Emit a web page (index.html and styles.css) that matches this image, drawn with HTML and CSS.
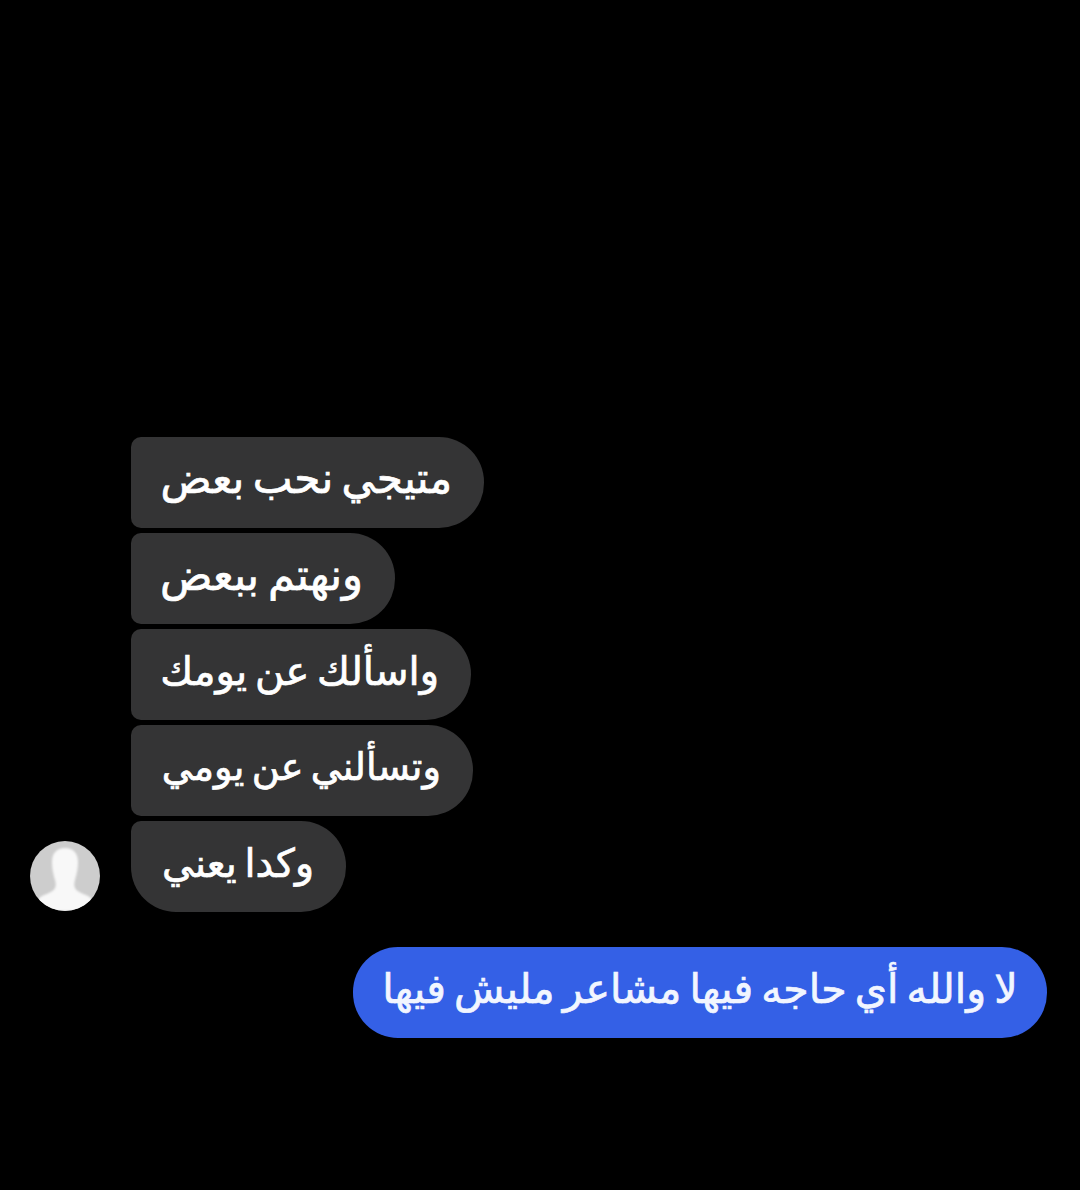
FILE: index.html
```html
<!DOCTYPE html>
<html lang="ar">
<head>
    <meta charset="UTF-8">
    <meta name="viewport" content="width=device-width, initial-scale=1.0">
    <title>Chat</title>
    <link rel="stylesheet" href="styles.css">
</head>
<body>

    <div class="chat">
        <div class="incoming">
            <div class="avatar">
                <svg viewBox="0 0 70 70" width="70" height="70">
                    <defs>
                        <clipPath id="avatarClip"><circle cx="35" cy="35" r="35"/></clipPath>
                        <filter id="soft"><feGaussianBlur stdDeviation="0.8"/></filter>
                    </defs>
                    <g clip-path="url(#avatarClip)">
                        <rect width="70" height="70" fill="#cdcdcd"/>
                        <path d="M35 7c-8 0-13 5-13 14 0 8 2 14 3 18 1 3 1 6 0 8-2 4-9 6-13 8-4 2-6 7-6 15h58c0-8-2-13-6-15-4-2-11-4-13-8-1-2-1-5 0-8 1-4 3-10 3-18 0-9-5-14-13-14z" fill="#f8f8f8" filter="url(#soft)"/>
                    </g>
                </svg>
            </div>
            <div class="bubbles">
                <div class="bubble w1">متيجي نحب بعض</div>
                <div class="bubble w2">ونهتم ببعض</div>
                <div class="bubble w3">واسألك عن يومك</div>
                <div class="bubble w4">وتسألني عن يومي</div>
                <div class="bubble w5 last">وكدا يعني</div>
            </div>
        </div>

        <div class="outgoing">
            <div class="bubble-me">لا والله أي حاجه فيها مشاعر مليش فيها</div>
        </div>
    </div>

</body>
</html>
```

FILE: styles.css
```css
body {
    margin: 0;
    background-color: #000;
    font-family: 'DejaVu Sans', sans-serif;
    color: #fff;
}

.chat {
    height: 1190px;
    box-sizing: border-box;
    padding: 437px 33px 0 30px;
}

.incoming {
    display: flex;
    align-items: flex-end;
    gap: 31px;
}

.avatar {
    width: 70px;
    height: 70px;
    margin-bottom: 1px;
}

.avatar svg {
    display: block;
}

.bubbles {
    display: flex;
    flex-direction: column;
    align-items: flex-start;
    gap: 5px;
}

.bubble {
    box-sizing: border-box;
    height: 91px;
    padding: 0 32px;
    line-height: 84px;
    background-color: #343435;
    border-radius: 10px 45px 45px 10px;
    -webkit-text-stroke: 0.7px #fff;
    word-spacing: -5px;
    white-space: nowrap;
    direction: rtl;
}

.bubble.last {
    border-radius: 10px 45px 45px 45px;
}

/* each line keeps the width it has in the chat */
.w1 { width: 353px; font-size: 42.2px; }
.w2 { width: 264px; font-size: 43.4px; }
.w3 { width: 340px; font-size: 40px; }
.w4 { width: 342px; font-size: 38.3px; }
.w5 { width: 215px; font-size: 39.5px; }

.outgoing {
    display: flex;
    justify-content: flex-end;
    margin-top: 35px;
}

.bubble-me {
    box-sizing: border-box;
    width: 694px;
    height: 91px;
    line-height: 84px;
    text-align: center;
    background-color: #3460e6;
    border-radius: 45px;
    font-size: 41.2px;
    color: #f2f6ff;
    -webkit-text-stroke: 0.7px #f2f6ff;
    word-spacing: -5px;
    white-space: nowrap;
    direction: rtl;
}
```
